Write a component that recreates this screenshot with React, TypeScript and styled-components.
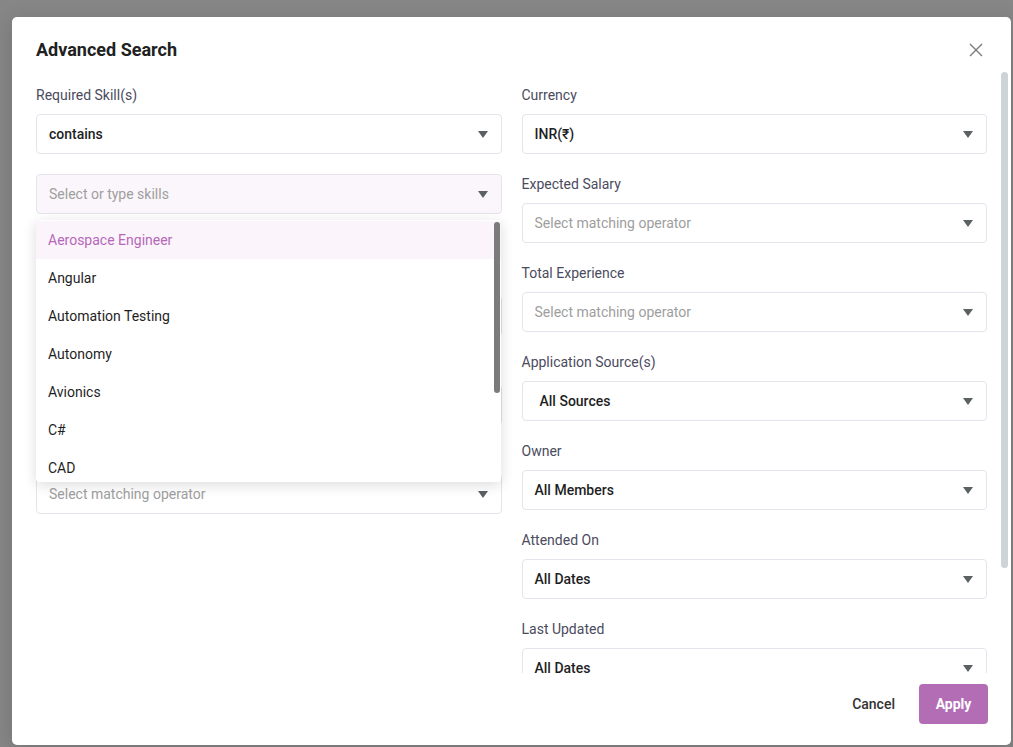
import React from "react"
import styled, { createGlobalStyle } from "styled-components"

const GlobalStyle = createGlobalStyle`
  * { box-sizing: border-box; }
  html, body { margin: 0; padding: 0; }
  body {
    font-family: Roboto, "Liberation Sans", Arial, sans-serif;
    background: #868686;
    overflow: hidden;
  }
`

const Backdrop = styled.div`
  width: 1013px;
  height: 747px;
  padding: 17px 2px 2px 12px;
  background: #868686;
`

const Modal = styled.div`
  width: 999px;
  height: 728px;
  background: #fff;
  border-radius: 5px;
  display: flex;
  flex-direction: column;
  box-shadow: 0 4px 20px rgba(0, 0, 0, 0.15);
`

const Header = styled.div`
  height: 55px;
  flex: none;
  display: flex;
  align-items: center;
  justify-content: space-between;
  padding: 10px 27px 0 24px;
`

const Title = styled.h2`
  margin: 0;
  font-size: 18px;
  font-weight: 700;
  color: #212121;
`

const CloseButton = styled.button`
  border: 0;
  background: none;
  padding: 0;
  width: 16px;
  height: 16px;
  display: flex;
  align-items: center;
  justify-content: center;
  cursor: pointer;
`

const BodyWrap = styled.div`
  position: relative;
  flex: 1;
  min-height: 0;
`

const Body = styled.div`
  height: 100%;
  overflow: hidden;
  padding: 14px 24px 0 24px;
`

// scroll thumbs drawn over the content (headless browser hides native bars)
const ScrollThumb = styled.div<{ $top: number; $height: number; $right: number; $width: number; $color: string }>`
  position: absolute;
  top: ${p => p.$top}px;
  right: ${p => p.$right}px;
  width: ${p => p.$width}px;
  height: ${p => p.$height}px;
  border-radius: 4px;
  background: ${p => p.$color};
  z-index: 6;
`

const Columns = styled.div`
  display: grid;
  grid-template-columns: 1fr 1fr;
  column-gap: 20px;
  align-items: start;
  padding-bottom: 23px;
`

const Column = styled.div`
  display: flex;
  flex-direction: column;
`

const Field = styled.div<{ $after?: number }>`
  position: relative;
  display: flex;
  flex-direction: column;
  margin-bottom: ${p => p.$after ?? 21}px;
`

const Label = styled.label`
  font-size: 14px;
  line-height: 18px;
  height: 18px;
  color: #4b4b5e;
  margin-bottom: 10px;
`

const SelectBox = styled.div<{ $tinted?: boolean; $indent?: number; $top?: number }>`
  height: 40px;
  margin-top: ${p => p.$top ?? 0}px;
  border: 1px solid ${p => (p.$tinted ? "#e8e2ec" : "#e2e5ec")};
  border-radius: 4px;
  background: ${p => (p.$tinted ? "#fbf6fb" : "#fff")};
  display: flex;
  align-items: center;
  justify-content: space-between;
  padding: 0 13px 0 ${p => p.$indent ?? 12}px;
  cursor: pointer;
`

const Value = styled.span<{ $placeholder?: boolean }>`
  font-size: 14px;
  font-weight: ${p => (p.$placeholder ? 400 : 500)};
  color: ${p => (p.$placeholder ? "#9e9e9e" : "#1f1f1f")};
`

const Caret = styled.span`
  width: 0;
  height: 0;
  border-left: 5.5px solid transparent;
  border-right: 5.5px solid transparent;
  border-top: 7px solid #5b6163;
`

const Menu = styled.div`
  position: absolute;
  top: calc(100% + 6px);
  left: 0;
  right: 1px;
  height: 262px;
  background: #fff;
  border-radius: 4px;
  box-shadow: 0 3px 14px rgba(0, 0, 0, 0.14);
  overflow: hidden;
  z-index: 5;
`

const MenuList = styled.ul`
  margin: 0;
  padding: 1px 0 0;
  list-style: none;
`

const MenuItem = styled.li<{ $active?: boolean }>`
  height: 38px;
  display: flex;
  align-items: center;
  padding-left: 12px;
  font-size: 14px;
  color: ${p => (p.$active ? "#b469b8" : "#1f1f1f")};
  background: ${p => (p.$active ? "#fcf4fb" : "#fff")};
  cursor: pointer;
`

const Footer = styled.div`
  height: 72px;
  flex: none;
  display: flex;
  align-items: flex-start;
  justify-content: flex-end;
  gap: 16px;
  padding: 11px 23px 0 0;
`

const TextButton = styled.button`
  height: 40px;
  border: 0;
  background: none;
  padding: 0 8px;
  font-family: inherit;
  font-size: 14px;
  font-weight: 500;
  color: #333;
  cursor: pointer;
`

const PrimaryButton = styled.button`
  height: 40px;
  width: 69px;
  border: 0;
  border-radius: 4px;
  background: #b36db5;
  font-family: inherit;
  font-size: 14px;
  font-weight: 700;
  color: #fff;
  cursor: pointer;
`

const skills = [
  "Aerospace Engineer",
  "Angular",
  "Automation Testing",
  "Autonomy",
  "Avionics",
  "C#",
  "CAD",
]

interface SelectProps {
  value?: string
  placeholder?: string
  tinted?: boolean
  indent?: number
  top?: number
}

const Select = ({ value, placeholder, tinted, indent, top }: SelectProps) => (
  <SelectBox $tinted={tinted} $indent={indent} $top={top}>
    {value ? <Value>{value}</Value> : <Value $placeholder>{placeholder}</Value>}
    <Caret />
  </SelectBox>
)

const rightFields: { label: string; value?: string; placeholder?: string; indent?: number }[] = [
  { label: "Currency", value: "INR(₹)" },
  { label: "Expected Salary", placeholder: "Select matching operator" },
  { label: "Total Experience", placeholder: "Select matching operator" },
  { label: "Application Source(s)", value: "All Sources", indent: 17 },
  { label: "Owner", value: "All Members" },
  { label: "Attended On", value: "All Dates" },
  { label: "Last Updated", value: "All Dates" },
]

export default function App() {
  return <>
    <GlobalStyle />
    <Backdrop>
      <Modal>
        <Header>
          <Title>Advanced Search</Title>
          <CloseButton aria-label="Close">
            <svg width="14" height="14" viewBox="0 0 14 14">
              <path d="M1 1 L13 13 M13 1 L1 13" stroke="#7a7a7a" strokeWidth="1.4" fill="none" />
            </svg>
          </CloseButton>
        </Header>
        <BodyWrap>
          <Body>
            <Columns>
              <Column>
                <Field $after={54}>
                  <Label>Required Skill(s)</Label>
                  <Select value="contains" />
                  <Field $after={0}>
                    <Select tinted top={20} placeholder="Select or type skills" />
                    <Menu>
                      <MenuList>
                        {skills.map((s, i) => <MenuItem key={s} $active={i === 0}>{s}</MenuItem>)}
                      </MenuList>
                      <ScrollThumb $top={2} $height={171} $right={1} $width={6} $color="#7b7b7b" />
                    </Menu>
                  </Field>
                </Field>
                {/* fields hidden behind the open skills menu */}
                <Field>
                  <Label />
                  <Select placeholder=" " />
                </Field>
                <Field>
                  <Label />
                  <Select placeholder=" " />
                </Field>
                <Field>
                  <Label />
                  <Select placeholder="Select matching operator" />
                </Field>
              </Column>
              <Column>
                {rightFields.map(f =>
                  <Field key={f.label}>
                    <Label>{f.label}</Label>
                    <Select value={f.value} placeholder={f.placeholder} indent={f.indent} />
                  </Field>
                )}
              </Column>
            </Columns>
          </Body>
          <ScrollThumb $top={0} $height={496} $right={3} $width={7} $color="#ced3d8" />
        </BodyWrap>
        <Footer>
          <TextButton>Cancel</TextButton>
          <PrimaryButton>Apply</PrimaryButton>
        </Footer>
      </Modal>
    </Backdrop>
  </>
}
